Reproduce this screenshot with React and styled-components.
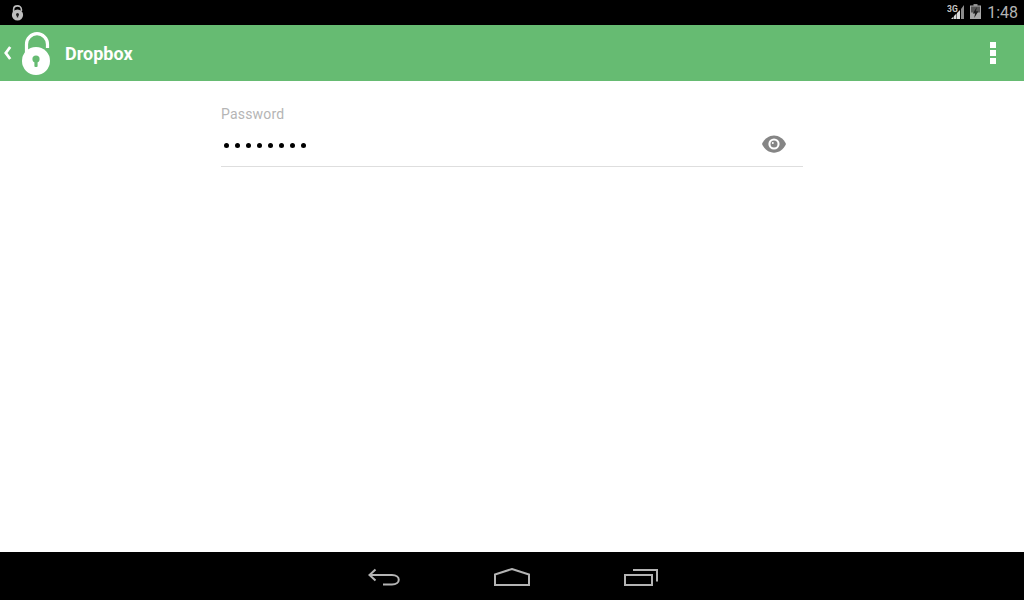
import React from "react";
import styled, { createGlobalStyle } from "styled-components";

const Global = createGlobalStyle`
  html, body { margin: 0; padding: 0; background: #fff; }
  body { font-family: Roboto, "Liberation Sans", sans-serif; }
`;

const Screen = styled.div`
  width: 1024px;
  height: 600px;
  display: flex;
  flex-direction: column;
  overflow: hidden;
  background: #fff;
`;

const StatusBar = styled.div`
  height: 25px;
  flex: none;
  background: #000;
  display: flex;
  align-items: center;
  justify-content: space-between;
  padding: 0 6px 0 11px;
`;

const StatusRight = styled.div`
  display: flex;
  align-items: center;
`;

const Clock = styled.span`
  font-size: 16px;
  color: #b4b4b4;
  margin-left: 6px;
  line-height: 25px;
`;

const ActionBar = styled.header`
  height: 56px;
  flex: none;
  background: #66bb72;
  display: flex;
  align-items: center;
  padding: 0 28px 0 3px;
`;

const Title = styled.h1`
  margin: 0 0 0 12px;
  font-size: 18px;
  font-weight: 700;
  color: #fff;
  flex: 1;
`;

const Chevron = styled.svg`
  margin-right: 9px;
`;

const Menu = styled.div`
  display: flex;
  flex-direction: column;
  gap: 2px;
`;

const MenuDot = styled.span`
  width: 6px;
  height: 6px;
  background: #fff;
`;

const Content = styled.main`
  flex: 1;
  padding: 25px 221px 0;
`;

const Label = styled.label`
  display: block;
  font-size: 14px;
  line-height: 16px;
  letter-spacing: 0.2px;
  color: #b5b5b5;
`;

const Field = styled.div`
  height: 42px;
  margin-top: 2px;
  display: flex;
  align-items: center;
  justify-content: space-between;
  border-bottom: 1px solid #dedede;
  padding: 0 17px 0 3px;
`;

const Dots = styled.div`
  display: flex;
  gap: 6px;
`;

const Dot = styled.span`
  width: 5px;
  height: 5px;
  border-radius: 50%;
  background: #000;
`;

const Eye = styled.svg`
  margin-top: -2px;
`;

const NavBar = styled.nav`
  height: 46px;
  flex: none;
  background: #000;
  display: flex;
  align-items: center;
  justify-content: center;
  padding-top: 2px;
`;

const NavItem = styled.div`
  width: 128px;
  display: flex;
  justify-content: center;
`;

const PadLock = () => (
  <svg width="32" height="44" viewBox="0 0 32 44">
    <path d="M5.5 24 V13.2 A10.5 10.5 0 0 1 26.5 13.2 V17" fill="none" stroke="#fff" strokeWidth="3.2" />
    <circle cx="15" cy="30" r="14" fill="#fff" />
    <circle cx="15" cy="28" r="3.6" fill="#66bb72" />
    <rect x="13.4" y="28" width="3.2" height="8" rx="1" fill="#66bb72" />
  </svg>
);

export default function App() {
  return (
    <Screen>
      <Global />
      <StatusBar>
        <svg width="13" height="17" viewBox="0 0 13 17">
          <path d="M2.6 8 V5.5 C2.6 0.6 10.4 0.6 10.4 5.5 V7" fill="none" stroke="#bdbdbd" strokeWidth="1.6" />
          <circle cx="6.5" cy="11" r="5.6" fill="#bdbdbd" />
          <circle cx="6.5" cy="10.4" r="1.5" fill="#222" />
          <rect x="5.8" y="10.4" width="1.4" height="3" fill="#222" />
        </svg>
        <StatusRight>
          <svg width="17" height="19" viewBox="0 0 17 19">
            <text x="0" y="8.5" fontFamily="Roboto, sans-serif" fontSize="8.5" fontWeight="700" fill="#c4c4c4">3G</text>
            <path d="M4 16 L6.5 13.5 V16 Z" fill="#dcdcdc" />
            <path d="M7 13 L9.5 10.5 V16 H7 Z" fill="#dcdcdc" />
            <path d="M10 10 L13 7 V16 H10 Z" fill="#dcdcdc" />
            <path d="M14 6 L17 2 V16 H14 Z" fill="#8c8c8c" />
          </svg>
          <svg width="11" height="17" viewBox="0 0 11 17" style={{ marginLeft: 6 }}>
            <rect x="3.5" y="0" width="4" height="2" fill="#8a8a8a" />
            <rect x="0" y="1.5" width="11" height="13.5" fill="#a8a8a8" />
            <rect x="1" y="2.5" width="9" height="6" fill="#555" />
            <path d="M6.8 3 L2.8 9.4 H5.1 L4.2 14 L8.4 7.2 H6 Z" fill="#1c1c1c" />
          </svg>
          <Clock>1:48</Clock>
        </StatusRight>
      </StatusBar>
      <ActionBar>
        <Chevron width="9" height="14" viewBox="0 0 9 14">
          <path d="M7.2 1 L2.8 7 L7.2 13" fill="none" stroke="#fff" strokeWidth="2.8" />
        </Chevron>
        <PadLock />
        <Title>Dropbox</Title>
        <Menu>
          <MenuDot />
          <MenuDot />
          <MenuDot />
        </Menu>
      </ActionBar>
      <Content>
        <Label>Password</Label>
        <Field>
          <Dots>
            {Array.from({ length: 8 }).map((_, i) => (
              <Dot key={i} />
            ))}
          </Dots>
          <Eye width="24" height="18" viewBox="0 0 24 18">
            <path d="M0 9 C5 -2.5 19 -2.5 24 9 C19 20.5 5 20.5 0 9 Z" fill="#858585" />
            <circle cx="12" cy="9" r="5.6" fill="#fff" />
            <circle cx="12" cy="9" r="3.5" fill="#858585" />
            <circle cx="10.8" cy="8" r="1" fill="#fff" />
          </Eye>
        </Field>
      </Content>
      <NavBar>
        <NavItem>
          <svg width="32" height="18" viewBox="0 0 32 18" fill="none" stroke="#b4b4b4" strokeWidth="2">
            <path d="M7.5 1.5 L1.5 7 L7.5 12.5" />
            <path d="M2 7 H24 C33 7 33 16.5 24 16.5 H15" />
          </svg>
        </NavItem>
        <NavItem>
          <svg width="36" height="18" viewBox="0 0 36 18" fill="none" stroke="#b4b4b4" strokeWidth="2">
            <path d="M1 6.5 L18 1 L35 6.5 V17 H1 Z" />
          </svg>
        </NavItem>
        <NavItem>
          <svg width="36" height="18" viewBox="0 0 36 18" fill="none" stroke="#b4b4b4" strokeWidth="2">
            <rect x="3" y="7" width="27" height="10" />
            <path d="M11 2 H35 V13.5" />
          </svg>
        </NavItem>
      </NavBar>
    </Screen>
  );
}
